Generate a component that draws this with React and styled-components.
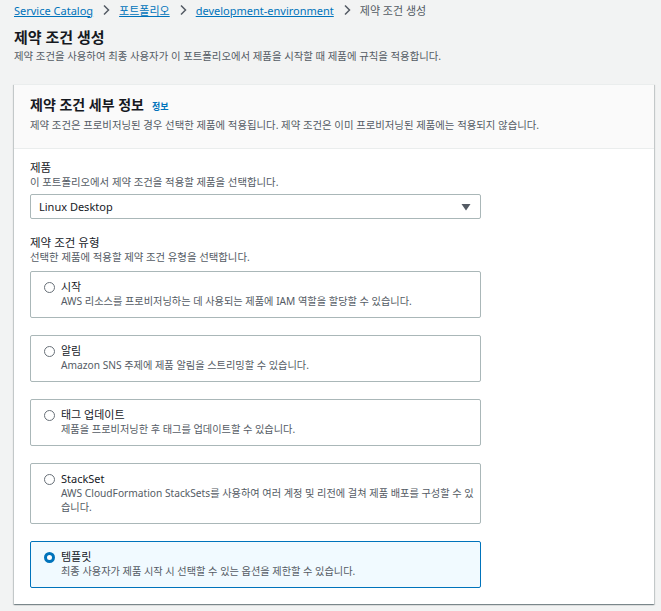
import React from "react";
import styled, { createGlobalStyle } from "styled-components";

const Global = createGlobalStyle`
  html, body { margin: 0; padding: 0; background: #f2f3f3; }
  body { font-family: "Noto Sans", "Noto Sans CJK KR", sans-serif; color: #16191f; }
  * { box-sizing: border-box; }
`;

const Page = styled.div`
  padding: 0 7px 0 14px;
  width: 661px;
  height: 611px;
  overflow: hidden;
`;

const Crumbs = styled.nav`
  display: flex;
  align-items: center;
  height: 20px;
  font-size: 11px;
`;

const Crumb = styled.a`
  color: #0073bb;
  text-decoration: underline;
  cursor: pointer;
`;

const CrumbCurrent = styled.span`
  color: #545b64;
`;

const Sep = styled.span`
  display: inline-flex;
  width: 26px;
  justify-content: center;
  color: #545b64;
`;

const Title = styled.h1`
  margin: 6px 0 0;
  font-size: 15px;
  font-weight: 700;
  line-height: 22px;
`;

const Sub = styled.p`
  margin: 0;
  font-size: 10.4px;
  line-height: 16px;
  color: #545b64;
`;

const Card = styled.section`
  margin-top: 20px;
  width: 640px;
  background: #fff;
  box-shadow: 0 1px 1px 0 rgba(0, 28, 36, 0.3), 1px 1px 1px 0 rgba(0, 28, 36, 0.15),
    -1px 1px 1px 0 rgba(0, 28, 36, 0.15);
  border-top: 1px solid #eaeded;
`;

const CardHeader = styled.header`
  background: #fafafa;
  border-bottom: 1px solid #eaeded;
  padding: 10px 16px 16px;
`;

const CardTitle = styled.h2`
  margin: 0 0 1px;
  font-size: 14px;
  font-weight: 700;
  line-height: 20px;
  display: flex;
  align-items: baseline;
  gap: 8px;
`;

const Info = styled.a`
  font-size: 9px;
  font-weight: 700;
  color: #0073bb;
`;

const CardBody = styled.div`
  padding: 11px 16px 16px;
  display: flex;
  flex-direction: column;
  gap: 16px;
  width: 483px;
`;

const Field = styled.div`
  display: flex;
  flex-direction: column;
`;

const Label = styled.div`
  font-size: 11.5px;
  line-height: 15px;
`;

const Desc = styled.div`
  font-size: 10.4px;
  line-height: 14px;
  color: #545b64;
`;

const Select = styled.div`
  margin-top: 5px;
  height: 25px;
  border: 1px solid #aab7b8;
  border-radius: 2px;
  display: flex;
  align-items: center;
  justify-content: space-between;
  padding: 0 9px 0 8px;
  font-size: 11px;
  color: #16191f;
  background: #fff;
`;

const Tiles = styled.div`
  margin-top: 7px;
  display: flex;
  flex-direction: column;
  gap: 17px;
`;

const Tile = styled.label`
  display: flex;
  gap: 6px;
  border: 1px solid ${(p) => (p.$selected ? "#0073bb" : "#aab7b8")};
  background: ${(p) => (p.$selected ? "#f1faff" : "#fff")};
  border-radius: 2px;
  padding: 7px 4px 9px 13px;
`;

const Radio = styled.span`
  flex: none;
  margin-top: 3px;
  width: 11px;
  height: 11px;
  border-radius: 50%;
  border: ${(p) => (p.$on ? "3.5px solid #0073bb" : "1px solid #687078")};
  background: #fff;
`;

const TileText = styled.div`
  display: flex;
  flex-direction: column;
`;

const TileLabel = styled.div`
  font-size: 11px;
  line-height: 15px;
  color: #16191f;
`;

const TileDesc = styled.div`
  font-size: 10.2px;
  line-height: 14px;
  color: #545b64;
  word-break: break-all;
`;

const Chevron = () => (
  <svg width="8" height="12" viewBox="0 0 8 12">
    <path d="M2 1.5 L6.5 6 L2 10.5" fill="none" stroke="#545b64" strokeWidth="1.5" />
  </svg>
);

const Caret = () => (
  <svg width="10" height="8" viewBox="0 0 10 8">
    <path d="M0.5 1 L9.5 1 L5 7.5 Z" fill="#545b64" />
  </svg>
);

const options = [
  { label: "시작", desc: "AWS 리소스를 프로비저닝하는 데 사용되는 제품에 IAM 역할을 할당할 수 있습니다." },
  { label: "알림", desc: "Amazon SNS 주제에 제품 알림을 스트리밍할 수 있습니다." },
  { label: "태그 업데이트", desc: "제품을 프로비저닝한 후 태그를 업데이트할 수 있습니다." },
  {
    label: "StackSet",
    desc: "AWS CloudFormation StackSets를 사용하여 여러 계정 및 리전에 걸쳐 제품 배포를 구성할 수 있습니다.",
  },
  { label: "템플릿", desc: "최종 사용자가 제품 시작 시 선택할 수 있는 옵션을 제한할 수 있습니다.", selected: true },
];

export default function App() {
  return (
    <>
      <Global />
      <Page>
        <Crumbs>
          <Crumb>Service Catalog</Crumb>
          <Sep><Chevron /></Sep>
          <Crumb>포트폴리오</Crumb>
          <Sep><Chevron /></Sep>
          <Crumb>development-environment</Crumb>
          <Sep><Chevron /></Sep>
          <CrumbCurrent>제약 조건 생성</CrumbCurrent>
        </Crumbs>
        <Title>제약 조건 생성</Title>
        <Sub>제약 조건을 사용하여 최종 사용자가 이 포트폴리오에서 제품을 시작할 때 제품에 규칙을 적용합니다.</Sub>
        <Card>
          <CardHeader>
            <CardTitle>
              제약 조건 세부 정보 <Info>정보</Info>
            </CardTitle>
            <Desc>제약 조건은 프로비저닝된 경우 선택한 제품에 적용됩니다. 제약 조건은 이미 프로비저닝된 제품에는 적용되지 않습니다.</Desc>
          </CardHeader>
          <CardBody>
            <Field>
              <Label>제품</Label>
              <Desc>이 포트폴리오에서 제약 조건을 적용할 제품을 선택합니다.</Desc>
              <Select>
                Linux Desktop
                <Caret />
              </Select>
            </Field>
            <Field>
              <Label>제약 조건 유형</Label>
              <Desc>선택한 제품에 적용할 제약 조건 유형을 선택합니다.</Desc>
              <Tiles>
                {options.map((o) => (
                  <Tile key={o.label} $selected={o.selected}>
                    <Radio $on={o.selected} />
                    <TileText>
                      <TileLabel>{o.label}</TileLabel>
                      <TileDesc>{o.desc}</TileDesc>
                    </TileText>
                  </Tile>
                ))}
              </Tiles>
            </Field>
          </CardBody>
        </Card>
      </Page>
    </>
  );
}
